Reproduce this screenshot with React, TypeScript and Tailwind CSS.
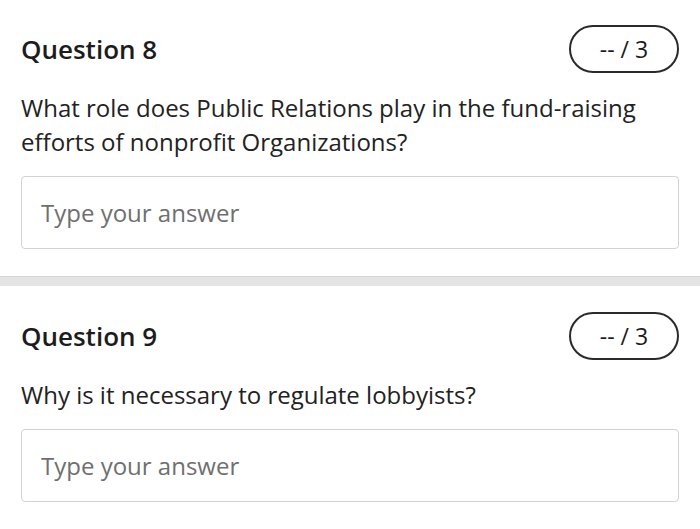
const questions = [
  {
    id: 8,
    text: 'What role does Public Relations play in the fund-raising efforts of nonprofit Organizations?',
    points: 3,
  },
  {
    id: 9,
    text: 'Why is it necessary to regulate lobbyists?',
    points: 3,
  },
];

const QuestionCard = ({ id, text, points, top }: { id: number; text: string; points: number; top: string }) => (
  <section className={`px-[21px] pb-[27px] ${top}`}>
    <div className="flex items-center justify-between h-[48px]">
      <h2 className="text-[26px] font-[550] text-[#1c1c1c] leading-none">Question {id}</h2>
      <div className="flex items-center justify-center w-[110px] h-[48px] rounded-full border-2 border-[#2a2a2a] text-[23px] text-[#1c1c1c]">
        -- / {points}
      </div>
    </div>
    <p className="mt-[18px] text-[24px] leading-[34px] text-[#222] pr-[10px]">{text}</p>
    <div className="mt-[17px] h-[73px] rounded-[4px] border-[1.5px] border-[#d3d3d3] flex items-center px-[19px]">
      <input
        className="w-full bg-transparent outline-none text-[24px] text-[#222] placeholder:text-[#6f6f6f]"
        placeholder="Type your answer"
      />
    </div>
  </section>
);

export default function App() {
  return (
    <div className="w-[700px] h-[529px] bg-white overflow-hidden" style={{ fontFamily: '"Open Sans", sans-serif' }}>
      <QuestionCard {...questions[0]} top="pt-[25px]" />
      <div className="h-[10px] bg-[#e4e4e4] border-t-[1.5px] border-[#d6d6d6]" />
      <QuestionCard {...questions[1]} top="pt-[26px]" />
    </div>
  );
}
